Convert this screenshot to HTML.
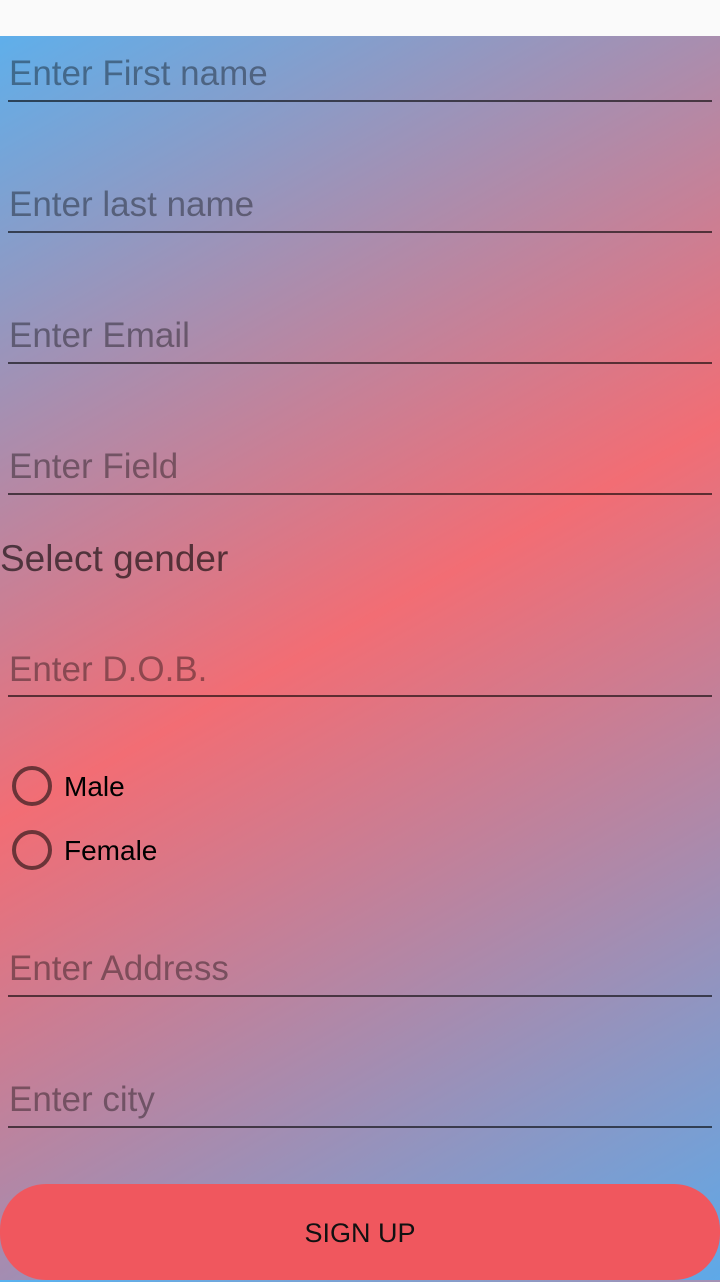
<!DOCTYPE html>
<html><head><meta charset="utf-8"><style>
html,body{margin:0;padding:0}
body{width:720px;height:1280px;position:relative;overflow:hidden;font-family:"Liberation Sans",sans-serif;
background:linear-gradient(151deg,#58b2f0 0%,#f26d74 49%,#5ea9e8 100%);}
.sb{position:absolute;left:0;top:0;width:720px;height:36px;background:#fafafa;}
.f{position:absolute;left:8px;width:704px;height:2px;background:rgba(0,0,0,0.6);}
.t{position:absolute;left:9px;font-size:35px;color:rgba(0,0,0,0.38);line-height:1;white-space:nowrap}
.r{position:absolute;left:12px;width:40px;height:40px;border:4px solid #6b3438;border-radius:50%;box-sizing:border-box}
.rl{position:absolute;left:64px;font-size:28px;color:#000;line-height:1}
.btn{position:absolute;left:0;top:1184px;width:720px;height:96px;background:#f0575e;border-radius:46px;
text-align:center;line-height:98px;font-size:27px;color:#111}
</style></head><body>
<div class="sb"></div>
<div class="t" style="top:56px">Enter First name</div><div class="f" style="top:100px"></div>
<div class="t" style="top:187px">Enter last name</div><div class="f" style="top:231px"></div>
<div class="t" style="top:318px">Enter Email</div><div class="f" style="top:362px"></div>
<div class="t" style="top:449px">Enter Field</div><div class="f" style="top:493px"></div>
<div style="position:absolute;left:0;top:540px;font-size:37px;color:rgba(0,0,0,0.6);line-height:1">Select gender</div>
<div class="t" style="top:652px">Enter D.O.B.</div><div class="f" style="top:695px"></div>
<div class="r" style="top:766px"></div><div class="rl" style="top:773px">Male</div>
<div class="r" style="top:830px"></div><div class="rl" style="top:837px">Female</div>
<div class="t" style="top:951px">Enter Address</div><div class="f" style="top:995px"></div>
<div class="t" style="top:1082px">Enter city</div><div class="f" style="top:1126px"></div>
<div class="btn">SIGN UP</div>
</body></html>
